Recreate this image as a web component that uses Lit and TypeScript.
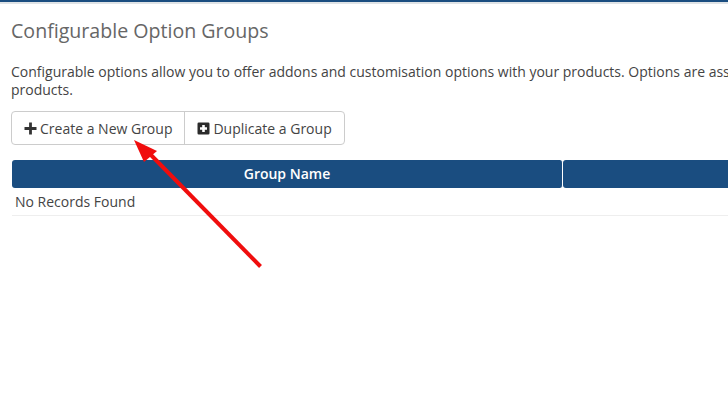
import { LitElement, html, css } from "lit";
import { customElement } from "lit/decorators.js";

@customElement("app-root")
export class AppRoot extends LitElement {
  static styles = css`
    :host {
      display: block;
      position: relative;
      width: 728px;
      height: 410px;
      overflow: hidden;
      background: #fff;
      font-family: "Open Sans", sans-serif;
      font-size: 14px;
      color: #444;
    }
    .topbar {
      height: 2px;
      background: #1a4d80;
      border-bottom: 2px solid #dfe3e6;
    }
    .content {
      width: 1200px;
      padding: 13px 11px 0;
    }
    h1 {
      margin: 0;
      font-size: 19.6px;
      font-weight: 400;
      line-height: 27px;
      color: #666;
    }
    p {
      margin: 19px 0 0;
      line-height: 18px;
      width: 1090px;
    }
    .btns {
      display: inline-flex;
      margin-top: 12px;
      height: 34px;
      box-sizing: border-box;
      border: 1px solid #ccc;
      border-radius: 4px;
      vertical-align: top;
    }
    .btn {
      display: flex;
      align-items: center;
      gap: 3px;
      padding: 0 12px;
      white-space: nowrap;
    }
    .btn + .btn {
      border-left: 1px solid #ccc;
    }
    .btn svg {
      display: block;
      flex: none;
    }
    .thead {
      display: grid;
      grid-template-columns: 551px 1fr;
      margin: 15px 0 0 1px;
      width: 1000px;
    }
    .th {
      height: 28px;
      line-height: 28px;
      background: #1a4d80;
      color: #fff;
      font-weight: 600;
      text-align: center;
      border-radius: 3px;
    }
    .th:first-child {
      border-right: 1px solid #fff;
    }
    .row {
      margin-left: 1px;
      width: 1000px;
      height: 28px;
      line-height: 28px;
      padding-left: 3px;
      box-sizing: border-box;
      border-bottom: 1px solid #eee;
    }
    .arrow {
      position: absolute;
      left: 0;
      top: 0;
      pointer-events: none;
    }
  `;

  render() {
    return html`
      <div class="topbar"></div>
      <div class="content">
        <h1>Configurable Option Groups</h1>
        <p>
          Configurable options allow you to offer addons and customisation options with your
          products. Options are assigned to groups and groups can then be assigned to products.
        </p>
        <div class="btns">
          <div class="btn">
            <svg width="13" height="13" viewBox="0 0 13 13">
              <path d="M5.100.5h2.800v4.600h4.600v2.800H7.900v4.600H5.100V7.900H.5V5.100h4.600z" fill="#333" />
            </svg>
            Create a New Group
          </div>
          <div class="btn">
            <svg width="13" height="13" viewBox="0 0 13 13">
              <path
                fill-rule="evenodd"
                d="M1.800.5h9.400a1.300 1.300 0 0 1 1.300 1.300v9.400a1.300 1.300 0 0 1-1.300 1.300H1.800a1.300 1.300 0 0 1-1.300-1.300V1.800A1.300 1.300 0 0 1 1.800.5zM5.200 3v2.200H3v2.600h2.200V10h2.600V7.800H10V5.200H7.800V3z"
                fill="#2b2b2b"
              />
            </svg>
            Duplicate a Group
          </div>
        </div>
        <div class="thead">
          <div class="th">Group Name</div>
          <div class="th"></div>
        </div>
        <div class="row">No Records Found</div>
      </div>
      <svg class="arrow" width="728" height="410" viewBox="0 0 728 410">
        <path d="M260.500 266.500L150 154" stroke="#f00d0d" stroke-width="4" fill="none" />
        <path d="M134 140L157 151L144 162Z" fill="#f00d0d" />
      </svg>
    `;
  }
}
